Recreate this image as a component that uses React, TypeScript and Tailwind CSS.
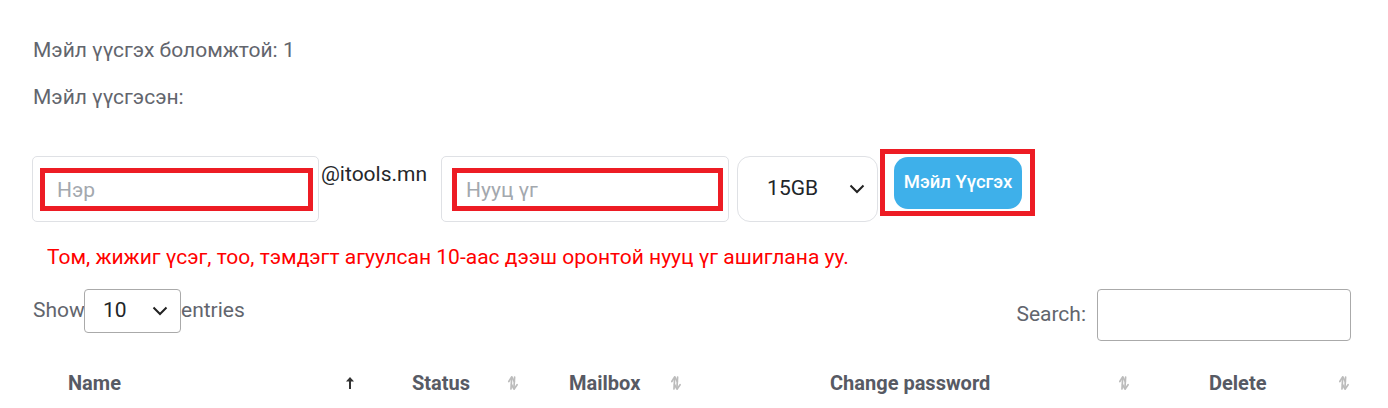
import React from "react";

const font = { fontFamily: "Roboto, 'Noto Sans', sans-serif" };

const Chevron = () => (
  <svg width="16" height="10" viewBox="0 0 16 10" fill="none">
    <polyline points="1.5,1.5 8,8 14.5,1.5" stroke="#222" strokeWidth="2" />
  </svg>
);

const SortAsc = () => (
  <svg width="8" height="12" viewBox="0 0 8 12">
    <polygon points="4,0 8,4.5 0,4.5" fill="#333" />
    <rect x="3" y="4" width="2" height="8" fill="#333" />
  </svg>
);

const SortBoth = () => (
  <svg width="12" height="16" viewBox="0 0 12 16">
    <g fill="none" stroke="#bcbcbc" strokeWidth="1.7" strokeLinejoin="round" strokeLinecap="round">
      <path d="M4 14 L4.6 4" />
      <path d="M1.8 6.5 L4.8 1.8 L7.3 6.6" />
      <path d="M7.6 2.2 L7 12" />
      <path d="M4.6 9.6 L7 14.2 L10.1 9.7" />
    </g>
  </svg>
);

interface Column {
  title: string;
  icon: "asc" | "both";
  cls: string;
}

const columns: Column[] = [
  { title: "Name", icon: "asc", cls: "pr-[40px]" },
  { title: "Status", icon: "both", cls: "pr-[32px]" },
  { title: "Mailbox", icon: "both", cls: "pr-[130px]" },
  { title: "Change password", icon: "both", cls: "pr-[61px]" },
  { title: "Delete", icon: "both", cls: "pr-[10px]" },
];

export default function App() {
  return (
    <div className="w-[1388px] h-[408px] overflow-hidden bg-white pl-[32px] pr-[37px] pt-[35px] text-[21px]" style={font}>
      <p className="leading-[30px] text-[#62656d] pl-[1px]">Мэйл үүсгэх боломжтой: 1</p>
      <p className="leading-[30px] text-[#62656d] pl-[1px] mt-[17px]">Мэйл үүсгэсэн:</p>

      {/* create form */}
      <div className="flex items-start mt-[44px]">
        <div className="w-[287px] h-[66px] border border-[#dfe1e5] rounded-[5px] pl-[7px] pt-[11px]">
          <input
            placeholder="Нэр"
            className="w-[273px] h-[43px] border-[5px] border-[#ed1c24] pl-[12px] text-[21px] outline-none placeholder:text-[#a3a8ae]"
          />
        </div>
        <span className="ml-[2px] mt-[3px] leading-[30px] text-[#25272b]">@itools.mn</span>
        <div className="ml-[14px] w-[288px] h-[66px] border border-[#dfe1e5] rounded-[5px] pl-[10px] pt-[11px]">
          <input
            placeholder="Нууц үг"
            className="w-[271px] h-[43px] border-[5px] border-[#ed1c24] pl-[9px] text-[21px] outline-none placeholder:text-[#a3a8ae]"
          />
        </div>
        <div className="ml-[8px] w-[141px] h-[66px] border border-[#dfe1e5] rounded-[13px] flex items-center justify-between pl-[29px] pr-[12px] text-[#212529]">
          <span>15GB</span>
          <Chevron />
        </div>
        <div className="ml-[2px] -mt-[7px] border-[5px] border-[#ed1c24] pl-[9px] pr-[8px] pt-[3px] pb-[2px]">
          <button className="w-[128px] h-[52px] rounded-[14px] bg-[#3eb0ea] text-white text-[18.5px] font-medium">
            Мэйл Үүсгэх
          </button>
        </div>
      </div>

      <p className="mt-[20px] ml-[15px] leading-[30px] text-[#ff0000]">
        Том, жижиг үсэг, тоо, тэмдэгт агуулсан 10-аас дээш оронтой нууц үг ашиглана уу.
      </p>

      {/* table controls */}
      <div className="flex items-start justify-between mt-[17px]">
        <div className="flex items-center text-[#62656d] h-[44px] pl-[1px]">
          <span className="w-[51px]">Show</span>
          <div className="w-[97px] h-[44px] border border-[#aaaaaa] rounded-[4px] flex items-center justify-between pl-[18px] pr-[12px] text-[#212529]">
            <span>10</span>
            <Chevron />
          </div>
          <span>entries</span>
        </div>
        <div className="flex items-center text-[#62656d] h-[52px]">
          <span>Search:</span>
          <input className="ml-[11px] w-[254px] h-[52px] border border-[#aaaaaa] rounded-[4px] outline-none" />
        </div>
      </div>

      {/* table header */}
      <div className="grid grid-cols-[344px_157px_261px_379px_169px] ml-[18px] mt-[27px]">
        {columns.map((c) => (
          <div key={c.title} className={`flex items-center justify-between pl-[18px] ${c.cls}`}>
            <span className="font-bold text-[20px] text-[#575a64] leading-[30px]">{c.title}</span>
            {c.icon === "asc" ? <SortAsc /> : <SortBoth />}
          </div>
        ))}
      </div>
    </div>
  );
}
